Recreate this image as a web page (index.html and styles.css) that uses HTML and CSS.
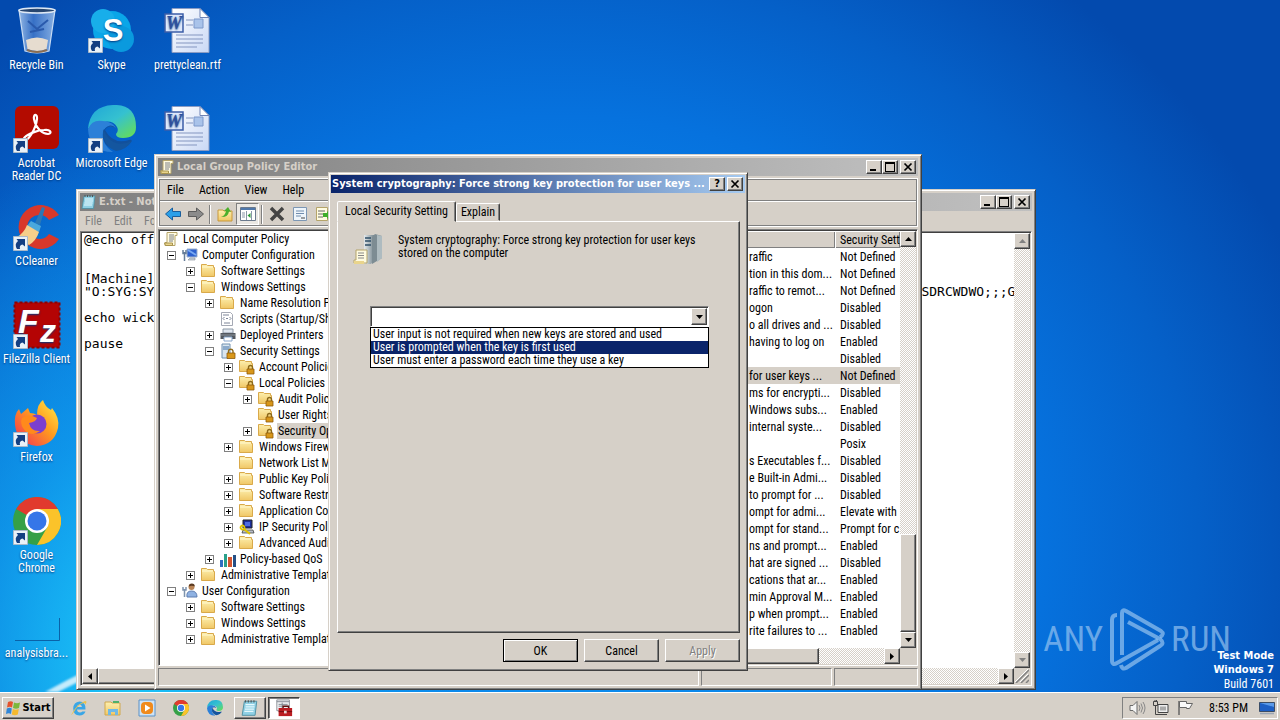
FILE: index.html
```html
<!DOCTYPE html>
<html lang="en">
<head>
<meta charset="utf-8">
<title>Desktop</title>
<link rel="stylesheet" href="styles.css">
</head>
<body>
<svg class="sprites" aria-hidden="true">
  <defs>
    <linearGradient id="gFolder" x1="0" y1="0" x2="0" y2="1"><stop offset="0" stop-color="#fdf0b0"/><stop offset="1" stop-color="#f0c765"/></linearGradient>
    <linearGradient id="gEdge" x1="0" y1="0" x2="1" y2="1"><stop offset="0" stop-color="#1fa5d8"/><stop offset=".5" stop-color="#35c1d0"/><stop offset="1" stop-color="#6be04a"/></linearGradient>
    <linearGradient id="gFox" x1="1" y1="0" x2="0" y2="1"><stop offset="0" stop-color="#fff04a"/><stop offset=".45" stop-color="#ff9a1f"/><stop offset="1" stop-color="#f0285a"/></linearGradient>
    <linearGradient id="gPage" x1="0" y1="0" x2="1" y2="1"><stop offset="0" stop-color="#fff"/><stop offset="1" stop-color="#c9d8f5"/></linearGradient>
    <linearGradient id="gServer" x1="0" y1="0" x2="1" y2="0"><stop offset="0" stop-color="#e4e9ec"/><stop offset="1" stop-color="#6f8088"/></linearGradient>
    <linearGradient id="gBin" x1="0" y1="0" x2="1" y2="0"><stop offset="0" stop-color="#b7d3f2" stop-opacity=".8"/><stop offset=".4" stop-color="#4d80cf" stop-opacity=".7"/><stop offset="1" stop-color="#a8c8ef" stop-opacity=".8"/></linearGradient>
  </defs>
  <symbol id="folder" viewBox="0 0 16 16"><path d="M.5 1.500h5l1 1h6v2h1v9H.5z" fill="url(#gFolder)" stroke="#d9a94a"/><path d="M1 4h11" stroke="#fff8d0"/></symbol>
  <symbol id="lockfolder" viewBox="0 0 16 16"><path d="M.5 1.5h5l1 1h6v2h1v8H.5z" fill="url(#gFolder)" stroke="#d9a94a"/><path d="M9.500 10V8.500a2 2 0 0 1 4 0V10" fill="none" stroke="#8c6a1c" stroke-width="1.400"/><path d="M8 10h7v5H8z" fill="#d8971a" stroke="#8f5c0a" stroke-width=".8"/></symbol>
  <symbol id="scroll" viewBox="0 0 16 16"><path d="M4 1.500h10v3h-2v10H2v-3h2z" fill="#fffbe0" stroke="#b5a46a"/><path d="M1.500 12h8v2.500h-7z" fill="#e9d48c" stroke="#a8934e"/><path d="M6 4h5M6 6h5M6 8h5M6 10h4" stroke="#7d8087"/></symbol>
  <symbol id="computer" viewBox="0 0 16 16"><path d="M5 2h10v8H5z" fill="#2d61cf" stroke="#9fb2cc"/><path d="M6 3l8 5" stroke="#79a9f2" stroke-width="2"/><path d="M8 11h5v2h-7z" fill="#cbd3db" stroke="#818b97" stroke-width=".6"/><path d="M2.500 5v9M1 3v3.500h3V3" fill="none" stroke="#667d98" stroke-width="1.500"/></symbol>
  <symbol id="user" viewBox="0 0 16 16"><circle cx="9.500" cy="4" r="3" fill="#b98455"/><path d="M6.800 3.500q0-3 3-3t3 3q-3-1.500-6 0" fill="#5b3a20"/><path d="M5 14q-1-6 4.500-6t5.500 6z" fill="#8fb2e2" stroke="#5d7db0"/><path d="M2.500 6v8M1 4v3h3V4" fill="none" stroke="#7e93ad" stroke-width="1.500"/></symbol>
  <symbol id="script" viewBox="0 0 16 16"><path d="M1.500 1.500h9l2 2v11h-11z" fill="#fff" stroke="#a5a9b4"/><path d="M4.500 6L3 7.500 4.500 9M9.500 6L11 7.500 9.500 9M6 7.500h2M4 12h6M3 4h6" fill="none" stroke="#7c8497"/></symbol>
  <symbol id="printer" viewBox="0 0 16 16"><path d="M3 2h10v4H3z" fill="#dfe6ef" stroke="#8c98a6"/><path d="M.5 6h15v6H.5z" fill="#53585f"/><path d="M1 8h14" stroke="#8d959f"/><path d="M4 10h8v4H4z" fill="#fff" stroke="#87a6cc"/></symbol>
  <symbol id="secure" viewBox="0 0 16 16"><path d="M2 1h8v14H2z" fill="#d9e5ef" stroke="#7191b0"/><path d="M3 4h6M3 6h6" stroke="#3e70a8"/><path d="M8.500 10V8a2.300 2.300 0 0 1 4.500 0v2" fill="none" stroke="#8c6a1c" stroke-width="1.400"/><path d="M7 10h8v5.500H7z" fill="#d8971a" stroke="#8f5c0a" stroke-width=".8"/></symbol>
  <symbol id="ipsec" viewBox="0 0 16 16"><path d="M4 1h9v8H4z" fill="#1d2f9c" stroke="#222"/><path d="M6 3h5v4H6z" fill="#4d6ce0"/><path d="M4 11h10l1 3H3z" fill="#b9bdc6" stroke="#333" stroke-width=".7"/><circle cx="3.500" cy="8.500" r="2" fill="none" stroke="#e0c400" stroke-width="1.800"/><path d="M5 10l6 5" stroke="#e0c400" stroke-width="2"/></symbol>
  <symbol id="qos" viewBox="0 0 16 16"><path d="M0 9h3v7H0z" fill="#2f6fc2"/><path d="M4 3h3v13H4z" fill="#2aa08a"/><path d="M8 6h4v10H8z" fill="#d3552f"/><path d="M13 4h3v12h-3z" fill="#234f86"/></symbol>
  <symbol id="notepad" viewBox="0 0 16 16"><path d="M3 2h11l-1.500 12.500H1z" fill="#8fd0e4" stroke="#4b8da0" stroke-width=".8"/><path d="M4 5h8M4 7h8M3.500 9h8M3 11h8" stroke="#e6f8fc"/><path d="M4 1v2M6.500 1v2M9 1v2M11.500 1v2" stroke="#555"/></symbol>
  <symbol id="toolbox" viewBox="0 0 20 20"><path d="M2 1h14v12H2z" fill="#eef0f2" stroke="#8a8f96"/><path d="M2 3h14M4 6h10M4 8h10M8 4v8" stroke="#7f868e"/><path d="M9 10V8h6v2" fill="none" stroke="#5c1212" stroke-width="1.500"/><path d="M4 10h15v9H4z" fill="#bb1d22"/><path d="M4 14h15" stroke="#6f0c10"/><path d="M10 13h3v3h-3z" fill="#e5d5d5"/></symbol>
  <symbol id="chrome" viewBox="0 0 48 48"><circle cx="24" cy="24" r="24" fill="#35a047"/><path d="M24 24L3.200 12A24 24 0 0 1 44.800 12z" fill="#e13a2e"/><path d="M24 12H44.800A24 24 0 0 1 24 48L34.400 30z" fill="#fbc32a"/><circle cx="24" cy="24" r="12" fill="#fff"/><circle cx="24" cy="24" r="9.500" fill="#3576e8"/></symbol>
  <symbol id="edge" viewBox="0 0 48 48"><path d="M0 24Q2 1 25 0t23 22q0 11-13 11-7 0-7-4 3-3 1-7-4-7-14-5Q3 18 0 24" fill="url(#gEdge)"/><path d="M0 24Q4 14 15 16q10 1 13 7-10-5-13 4-2 12 10 20Q1 47 0 24" fill="#2c80d8"/><path d="M16 25q-4 18 14 19 8 0 13-7 2-3-2-2-16 5-24-10 3-6 11-2-6-6-12 2" fill="#12509c"/><path d="M15 24q-1 17 13 22 10-1 16-10-20 9-29-12" fill="#14569f"/></symbol>
  <symbol id="word" viewBox="0 0 48 48"><path d="M8 1.500h28l9 9v35H8z" fill="url(#gPage)" stroke="#8a9cc4"/><path d="M36 1.500v9h9z" fill="#fff" stroke="#6f83b4"/><path d="M22 13h7M22 18h7M12 28h27M12 32h27M12 36h27M12 40h21" stroke="#8496c0" stroke-width="1.200"/><path d="M30 12h9v9h-9z" fill="#a9c3ea" stroke="#7d98ca"/><path d="M1 7h18v18H1z" fill="#dfe9fb" stroke="#3c5ea8" stroke-width="1.500"/><text x="10" y="22" text-anchor="middle" class="wordmark">W</text></symbol>
  <symbol id="short" viewBox="0 0 15 15"><path d="M.5.5h14v14H.5z" fill="#e9f1f8" stroke="#a9b9c9"/><path d="M4 13q-3-5 1-8L3.500 3H12v7.500l-2.500-2Q6 9 7 13z" fill="#143f82"/></symbol>
  <symbol id="up" viewBox="0 0 7 4"><path d="M0 4h7L3.500 0z"/></symbol>
  <symbol id="down" viewBox="0 0 7 4"><path d="M0 0h7L3.500 4z"/></symbol>
  <symbol id="left" viewBox="0 0 4 7"><path d="M4 0v7L0 3.500z"/></symbol>
  <symbol id="right" viewBox="0 0 4 7"><path d="M0 0v7l4-3.500z"/></symbol>
  <symbol id="min" viewBox="0 0 10 10"><path d="M1 7h6v2H1z"/></symbol>
  <symbol id="max" viewBox="0 0 10 10"><path d="M0 0h10v10H0zM1 2v7h8V2z" fill-rule="evenodd"/></symbol>
  <symbol id="close" viewBox="0 0 10 10"><path d="M1.500 1.500l7 7M8.500 1.500l-7 7" stroke="#000" stroke-width="1.700"/></symbol>
</svg>

<main class="desktop">
  <svg class="ray" viewBox="0 0 120 50"><path d="M15 50Q60 25 120 0Q70 30 28 50z" fill="#fff" opacity=".75"/></svg>
  <div class="icons">
    <div class="icon-col">
      <div class="dicon"><svg class="art" viewBox="0 0 48 48"><path d="M6 3h36l-6 41q-12 4-24 0z" fill="url(#gBin)" stroke="#c8dcf4" stroke-width="1.200"/><ellipse cx="24" cy="3.500" rx="18" ry="2.500" fill="#27466f" stroke="#dfe9f4" stroke-width="1.500"/><path d="M13 33q11-5 22 0l-1.500 9q-9 4-19 0z" fill="#e6dccf"/><path d="M15 14l9 8 11-9M17 25l14-3" stroke="#2a5aac" stroke-width="2" fill="none"/><path d="M14 43q10 4 20 0" stroke="#8a6d52" stroke-width="2" fill="none"/></svg><span>Recycle Bin</span></div>
      <div class="dicon"><svg class="art" viewBox="0 0 48 48"><rect x="2" y="1" width="44" height="43" rx="6" fill="#b30b00"/><path d="M11 35c3 3 12-11 13-21 .5-6-4-5-3 0 2 10 9 15 14 15 5-1 2-5-4-4-6 0-16 4-19 7-1 1-2 2-1 3z" fill="none" stroke="#fff" stroke-width="2.200"/><use href="#short" x="0" y="33" width="15" height="15"/></svg><span>Acrobat<br>Reader DC</span></div>
      <div class="dicon"><svg class="art" viewBox="0 0 48 48"><path d="M46 12A22 22 0 1 0 46 36L36 31A12 12 0 1 1 36 17z" fill="#d8382b"/><path d="M29 4l3 1-5 17-5-2z" fill="#2c78b5"/><path d="M18 18l10 5-2 6-12-6z" fill="#4aa8dc"/><path d="M14 22l12 7q-3 9-10 13L4 34q7-4 10-12" fill="#f6cf8a"/><use href="#short" x="0" y="33" width="15" height="15"/></svg><span>CCleaner</span></div>
      <div class="dicon"><svg class="art" viewBox="0 0 48 48"><rect x="1.500" y="1.500" width="45" height="45" fill="#b40404" stroke="#8f0000" stroke-width="2" stroke-dasharray="3 2"/><text x="5" y="32" class="fz">F</text><text x="27" y="41" class="fz fz-small">z</text><use href="#short" x="0" y="33" width="15" height="15"/></svg><span>FileZilla Client</span></div>
      <div class="dicon"><svg class="art" viewBox="0 0 48 48"><path d="M2 26Q1 15 6 10l2 5 7-6 2 5q4 0 7 2 0-11 6-15 2 7 8 10l1-2q8 10 6 20-4 17-21 18Q4 45 2 26" fill="url(#gFox)"/><circle cx="24" cy="25" r="9.500" fill="#7b3fd0"/><path d="M9 19q7-5 15 0-1 4-8 5 2 9 11 8-10 7-17-3-3-5-1-10" fill="#ff8a1c"/><use href="#short" x="0" y="33" width="15" height="15"/></svg><span>Firefox</span></div>
      <div class="dicon"><svg class="art" viewBox="0 0 48 48"><use href="#chrome" width="48" height="48"/><use href="#short" x="0" y="33" width="15" height="15"/></svg><span>Google<br>Chrome</span></div>
      <div class="dicon"><svg class="art" viewBox="0 0 48 48"><path d="M2 45.500h44.500V23" fill="none" stroke="#0a62a8"/></svg><span>analysisbra...</span></div>
    </div>
    <div class="icon-col">
      <div class="dicon"><svg class="art" viewBox="0 0 48 48"><circle cx="24" cy="23" r="19" fill="#0aa6e8"/><circle cx="15" cy="14" r="12" fill="#18aeea"/><circle cx="33" cy="32" r="13" fill="#0a9ade"/><text x="25" y="34" text-anchor="middle" class="skype">S</text><use href="#short" x="0" y="31" width="15" height="15"/></svg><span>Skype</span></div>
      <div class="dicon"><svg class="art" viewBox="0 0 48 48"><use href="#edge" width="48" height="48"/><use href="#short" x="0" y="33" width="15" height="15"/></svg><span>Microsoft Edge</span></div>
    </div>
    <div class="icon-col">
      <div class="dicon"><svg class="art"><use href="#word"/></svg><span>prettyclean.rtf</span></div>
      <div class="dicon"><svg class="art"><use href="#word"/></svg></div>
    </div>
  </div>

  <div class="watermark">
    <span>ANY</span>
    <svg viewBox="0 0 58 64" width="58" height="64"><g fill="none" stroke="currentColor" stroke-width="4" stroke-linejoin="round"><path d="M9 7q-5 0-5 5v40q0 6 5 3L50 32"/><path d="M14 47V5q0-4 4-2l35 20q4 3-1 6"/><path d="M20 14l32 17q5 4 0 7L18 60q-4 2-5-3"/></g></svg>
    <span>RUN</span>
  </div>
  <div class="testmode"><b>Test Mode</b><b>Windows 7</b><span>Build 7601</span></div>

  <section class="window notepad" aria-label="E.txt - Notepad">
    <header class="title title-off"><svg class="ic"><use href="#notepad"/></svg><h2>E.txt - Notepad</h2>
      <div class="sys"><button aria-label="Minimize"><svg><use href="#min"/></svg></button><button aria-label="Maximize"><svg><use href="#max"/></svg></button><button class="apart" aria-label="Close"><svg><use href="#close"/></svg></button></div></header>
    <nav class="menu menu-off"><button>File</button><button>Edit</button><button>Format</button></nav>
    <div class="editor sunken">
      <textarea aria-label="Text" spellcheck="false" wrap="off" readonly>@echo off


[Machine]
"O:SYG:SYD:(A;;CCDCLCSWRPWPDTLOCRSDRCWDWO;;;SY)(A;;CCDCLCSWRPWPDTLOCRSDRCWDWO;;;BA)  (A;;CCDCLCSWRPWPDTLOCRSDRCWDWO;;;GA)

echo wick

pause</textarea>
      <div class="vbar dim"><button aria-label="Scroll up"><svg class="av"><use href="#up"/></svg></button><button aria-label="Scroll down"><svg class="av"><use href="#down"/></svg></button></div>
      <div class="hbar"><button aria-label="Scroll left"><svg class="ah"><use href="#left"/></svg></button><div class="thumb"></div><div class="track"></div><button aria-label="Scroll right"><svg class="ah"><use href="#right"/></svg></button></div>
      <svg class="grip" viewBox="0 0 15 15"><path d="M2 15L15 2M7 15l8-8M12 15l3-3" stroke="#808080" stroke-width="1.500"/><path d="M1 14L14 1M6 14l8-8" stroke="#fff"/></svg>
    </div>
  </section>

  <section class="window policy" aria-label="Local Group Policy Editor">
    <header class="title title-off"><svg class="ic"><use href="#scroll"/></svg><h2>Local Group Policy Editor</h2>
      <div class="sys"><button aria-label="Minimize"><svg><use href="#min"/></svg></button><button aria-label="Maximize"><svg><use href="#max"/></svg></button><button class="apart" aria-label="Close"><svg><use href="#close"/></svg></button></div></header>
    <div class="bars">
      <nav class="menu"><button>File</button><button>Action</button><button>View</button><button>Help</button></nav>
      <div class="tools">
        <button aria-label="Back"><svg class="ic" viewBox="0 0 16 16"><path d="M.5 8l7-6v3.500h8v5h-8V14z" fill="#2b9fe8" stroke="#1a5e9c"/></svg></button>
        <button aria-label="Forward"><svg class="ic" viewBox="0 0 16 16"><path d="M15.500 8l-7-6v3.500h-8v5h8V14z" fill="#8b8b8b" stroke="#5c5c5c"/></svg></button>
        <i class="sep"></i>
        <button aria-label="Up one level"><svg class="ic" viewBox="0 0 16 16"><path d="M1 4h5l1 1h8v10H1z" fill="url(#gFolder)" stroke="#c9983b"/><path d="M4 11q4-1 5-6L7 5l4-4 3 5-2-.5q-1 6-8 5.500" fill="#4caf2c"/></svg></button>
        <button class="pressed" aria-label="Console tree"><svg class="ic" viewBox="0 0 16 16"><path d="M.5 1.500h15v13H.5z" fill="#fff" stroke="#6b7a8d"/><path d="M1 3h14" stroke="#4f78ab" stroke-width="2"/><path d="M6.500 5v9M11.500 5v9M2 7h3M2 9h3M2 11h3" stroke="#8a97a8"/><path d="M10.500 7v5L7.500 9.500z" fill="#2c9a3a"/></svg></button>
        <i class="sep"></i>
        <button aria-label="Delete"><svg class="ic" viewBox="0 0 16 16"><path d="M2 2l12 12M14 2L2 14" stroke="#444" stroke-width="3.500"/></svg></button>
        <button aria-label="Properties"><svg class="ic" viewBox="0 0 16 16"><path d="M1.500 1.500h13v13h-13z" fill="#eef5fb" stroke="#7d97b4"/><path d="M4 5h8M4 7.500h8M4 10h5" stroke="#6f8cae"/><path d="M9 12h4" stroke="#444"/></svg></button>
        <button aria-label="Export list"><svg class="ic" viewBox="0 0 16 16"><path d="M1.500 1.500h11v13h-11z" fill="#fffbe0" stroke="#b5a46a"/><path d="M3 5h7M3 8h5M3 11h5" stroke="#666"/><path d="M8 7h4V5l4 4-4 4v-2H8z" fill="#3fae2a"/></svg></button>
      </div>
    </div>
    <div class="panes">
      <div class="tree sunken" role="tree">
        <div class="node l0" role="treeitem"><i class="gap"></i><svg class="ic"><use href="#scroll"/></svg><span>Local Computer Policy</span></div>
        <div class="node l1" role="treeitem"><button class="exp" aria-label="Collapse"></button><svg class="ic"><use href="#computer"/></svg><span>Computer Configuration</span></div>
        <div class="node l2" role="treeitem"><button class="exp plus" aria-label="Expand"></button><svg class="ic"><use href="#folder"/></svg><span>Software Settings</span></div>
        <div class="node l2" role="treeitem"><button class="exp" aria-label="Collapse"></button><svg class="ic"><use href="#folder"/></svg><span>Windows Settings</span></div>
        <div class="node l3" role="treeitem"><button class="exp plus" aria-label="Expand"></button><svg class="ic"><use href="#folder"/></svg><span>Name Resolution Policy</span></div>
        <div class="node l3" role="treeitem"><i class="gap"></i><svg class="ic"><use href="#script"/></svg><span>Scripts (Startup/Shutdown)</span></div>
        <div class="node l3" role="treeitem"><button class="exp plus" aria-label="Expand"></button><svg class="ic"><use href="#printer"/></svg><span>Deployed Printers</span></div>
        <div class="node l3" role="treeitem"><button class="exp" aria-label="Collapse"></button><svg class="ic"><use href="#secure"/></svg><span>Security Settings</span></div>
        <div class="node l4" role="treeitem"><button class="exp plus" aria-label="Expand"></button><svg class="ic"><use href="#lockfolder"/></svg><span>Account Policies</span></div>
        <div class="node l4" role="treeitem"><button class="exp" aria-label="Collapse"></button><svg class="ic"><use href="#lockfolder"/></svg><span>Local Policies</span></div>
        <div class="node l5" role="treeitem"><button class="exp plus" aria-label="Expand"></button><svg class="ic"><use href="#lockfolder"/></svg><span>Audit Policy</span></div>
        <div class="node l5" role="treeitem"><i class="gap"></i><svg class="ic"><use href="#lockfolder"/></svg><span>User Rights Assignment</span></div>
        <div class="node l5" role="treeitem" aria-selected="true"><button class="exp plus" aria-label="Expand"></button><svg class="ic"><use href="#lockfolder"/></svg><span class="picked">Security Options</span></div>
        <div class="node l4" role="treeitem"><button class="exp plus" aria-label="Expand"></button><svg class="ic"><use href="#folder"/></svg><span>Windows Firewall</span></div>
        <div class="node l4" role="treeitem"><i class="gap"></i><svg class="ic"><use href="#folder"/></svg><span>Network List Manager</span></div>
        <div class="node l4" role="treeitem"><button class="exp plus" aria-label="Expand"></button><svg class="ic"><use href="#folder"/></svg><span>Public Key Policies</span></div>
        <div class="node l4" role="treeitem"><button class="exp plus" aria-label="Expand"></button><svg class="ic"><use href="#folder"/></svg><span>Software Restriction</span></div>
        <div class="node l4" role="treeitem"><button class="exp plus" aria-label="Expand"></button><svg class="ic"><use href="#folder"/></svg><span>Application Control</span></div>
        <div class="node l4" role="treeitem"><button class="exp plus" aria-label="Expand"></button><svg class="ic"><use href="#ipsec"/></svg><span>IP Security Policies</span></div>
        <div class="node l4" role="treeitem"><button class="exp plus" aria-label="Expand"></button><svg class="ic"><use href="#folder"/></svg><span>Advanced Audit</span></div>
        <div class="node l3" role="treeitem"><button class="exp plus" aria-label="Expand"></button><svg class="ic"><use href="#qos"/></svg><span>Policy-based QoS</span></div>
        <div class="node l2" role="treeitem"><button class="exp plus" aria-label="Expand"></button><svg class="ic"><use href="#folder"/></svg><span>Administrative Templates</span></div>
        <div class="node l1" role="treeitem"><button class="exp" aria-label="Collapse"></button><svg class="ic"><use href="#user"/></svg><span>User Configuration</span></div>
        <div class="node l2" role="treeitem"><button class="exp plus" aria-label="Expand"></button><svg class="ic"><use href="#folder"/></svg><span>Software Settings</span></div>
        <div class="node l2" role="treeitem"><button class="exp plus" aria-label="Expand"></button><svg class="ic"><use href="#folder"/></svg><span>Windows Settings</span></div>
        <div class="node l2" role="treeitem"><button class="exp plus" aria-label="Expand"></button><svg class="ic"><use href="#folder"/></svg><span>Administrative Templates</span></div>
      </div>
      <div class="list sunken">
        <div class="rows">
          <table>
            <thead><tr><th class="c1"></th><th>Security Setting</th></tr></thead>
            <tbody>
              <tr><td>raffic</td><td>Not Defined</td></tr>
              <tr><td>tion in this dom...</td><td>Not Defined</td></tr>
              <tr><td>raffic to remot...</td><td>Not Defined</td></tr>
              <tr><td>ogon</td><td>Disabled</td></tr>
              <tr><td>o all drives and ...</td><td>Disabled</td></tr>
              <tr><td>having to log on</td><td>Enabled</td></tr>
              <tr><td></td><td>Disabled</td></tr>
              <tr class="picked"><td>for user keys ...</td><td>Not Defined</td></tr>
              <tr><td>ms for encrypti...</td><td>Disabled</td></tr>
              <tr><td>Windows subs...</td><td>Enabled</td></tr>
              <tr><td>internal syste...</td><td>Disabled</td></tr>
              <tr><td></td><td>Posix</td></tr>
              <tr><td>s Executables f...</td><td>Disabled</td></tr>
              <tr><td>e Built-in Admi...</td><td>Disabled</td></tr>
              <tr><td>to prompt for ...</td><td>Disabled</td></tr>
              <tr><td>ompt for admi...</td><td>Elevate with</td></tr>
              <tr><td>ompt for stand...</td><td>Prompt for c</td></tr>
              <tr><td>ns and prompt...</td><td>Enabled</td></tr>
              <tr><td>hat are signed ...</td><td>Disabled</td></tr>
              <tr><td>cations that ar...</td><td>Enabled</td></tr>
              <tr><td>min Approval M...</td><td>Enabled</td></tr>
              <tr><td>p when prompt...</td><td>Enabled</td></tr>
              <tr><td>rite failures to ...</td><td>Enabled</td></tr>
            </tbody>
          </table>
        </div>
        <div class="vbar"><button aria-label="Scroll up"><svg class="av"><use href="#up"/></svg></button><div class="thumb"></div><button aria-label="Scroll down"><svg class="av"><use href="#down"/></svg></button></div>
        <div class="hbar"><div class="thumb"></div><div class="track"></div><button aria-label="Scroll right"><svg class="ah"><use href="#right"/></svg></button></div>
      </div>
    </div>
    <footer class="status"><span></span><span></span><span></span></footer>
  </section>

  <section class="window dialog" role="dialog" aria-labelledby="dlg">
    <header class="title"><h2 id="dlg">System cryptography: Force strong key protection for user keys ...</h2>
      <div class="sys"><button aria-label="Help" class="help">?</button><button class="apart" aria-label="Close"><svg><use href="#close"/></svg></button></div></header>
    <div class="dialog-body">
      <div class="tabs" role="tablist"><button role="tab" class="tab current" aria-selected="true">Local Security Setting</button><button role="tab" class="tab">Explain</button></div>
      <div class="page" role="tabpanel">
        <div class="about">
          <svg viewBox="0 0 32 32" width="32" height="32"><path d="M11 2h11v24l-4 5h-7z" fill="url(#gServer)"/><path d="M22 1l7 2v22l-10 6V4z" fill="#7d8c93"/><path d="M24 2l5 1v22l-5 4z" fill="#aebbc0"/><path d="M12 5h6M12 8h6M12 12h6" stroke="#2f4f68" stroke-width="1.500"/><path d="M3 17h11v13H1v-3h2z" fill="#fffbe0" stroke="#b5a46a"/><path d="M1 28h10v3H1z" fill="#e9d48c"/><path d="M5 20h6M5 22.500h6M5 25h6" stroke="#888"/></svg>
          <p>System cryptography: Force strong key protection for user keys<br>stored on the computer</p>
        </div>
        <div class="combo">
          <select aria-label="Setting"><option></option></select>
          <span class="combo-arrow"><svg class="av"><use href="#down"/></svg></span>
          <ul class="options" role="listbox">
            <li role="option">User input is not required when new keys are stored and used</li>
            <li role="option" aria-selected="true" class="chosen">User is prompted when the key is first used</li>
            <li role="option">User must enter a password each time they use a key</li>
          </ul>
        </div>
      </div>
      <div class="actions"><button class="push default">OK</button><button class="push">Cancel</button><button class="push" disabled>Apply</button></div>
    </div>
  </section>
</main>

<footer class="taskbar">
  <button class="task start"><svg viewBox="0 0 16 16" width="16" height="16"><path d="M3 2q3-1.500 5 0L7 7.500q-2-1.500-5 0z" fill="#e5532d"/><path d="M9 2.500q3 1.500 6 0L14 8q-3 1.500-6 0z" fill="#7cb83c"/><path d="M1.800 8.500q3-1.500 5 0L6 14q-2-1.500-5 0z" fill="#2f86d8"/><path d="M7.800 9q3 1.500 6 0l-1 5.500q-3 1.500-6 0z" fill="#f5b92e"/></svg>Start</button>
  <div class="quick">
    <button aria-label="Internet Explorer"><svg viewBox="0 0 18 18"><path d="M15.500 12.500q-1.500 4-6 4-6 0-6.300-7Q3.500 3 9.500 2.500q6.500.3 6 8H7q.3 3 3 3 1.500 0 2.300-1zM7 8h5q-.3-2.500-2.500-2.500T7 8" fill="#3aa6e6"/><path d="M4 13q-4 5-2 1.500Q7 5 15 2q3 0 0 4 1-3-3-1.500Q7 7 4 13" fill="#e9c24c"/></svg></button>
    <button aria-label="Explorer"><svg viewBox="0 0 18 18"><path d="M1 3h6l1 1h8v12H1z" fill="url(#gFolder)" stroke="#d0a84e"/><path d="M4 16v-6h10v6h-3v-3H7v3z" fill="#6fb9e6"/><path d="M9 3h6" stroke="#4fb06a" stroke-width="2"/></svg></button>
    <button aria-label="Media Player"><svg viewBox="0 0 18 18"><path d="M1 1h16v16H1z" fill="#cfe3f5" stroke="#5b92c8"/><rect x="3" y="3" width="12" height="12" rx="4" fill="#f08a1c"/><path d="M7 5.500v7L12.500 9z" fill="#fff"/></svg></button>
    <button aria-label="Chrome"><svg viewBox="0 0 18 18"><use href="#chrome" x="1" y="1" width="16" height="16"/></svg></button>
    <button aria-label="Edge"><svg viewBox="0 0 18 18"><use href="#edge" x="1" y="1" width="16" height="16"/></svg></button>
  </div>
  <button class="task app" aria-label="Notepad"><svg width="20" height="18"><use href="#notepad"/></svg></button>
  <button class="task app active" aria-label="Group Policy"><svg width="20" height="18"><use href="#toolbox"/></svg></button>
  <div class="tray">
    <svg viewBox="0 0 18 18"><path d="M2 6.500h3l4-4v13l-4-4H2z" fill="#f4f4f4" stroke="#6b6b6b"/><path d="M11 6q2 3 0 6M13 4.500q3 4.500 0 9M15 3q4 6 0 12" fill="none" stroke="#888"/></svg>
    <svg viewBox="0 0 18 18"><path d="M6 5.500h10v8H6z" fill="#eee" stroke="#444"/><path d="M8 7.500h6v4H8z" fill="#aaa"/><path d="M8 15.500h7M3.500 7v8.500H8M1.500 2.500h4v4h-4zM3 2.500V1M4.500 2.500V1" fill="none" stroke="#444"/></svg>
    <svg viewBox="0 0 18 18"><path d="M3 2v14" stroke="#666" stroke-width="1.500"/><path d="M3.500 2.500h7v2h6l-3 5h-3v-1h-7z" fill="#fafafa" stroke="#666"/></svg>
    <time>8:53 PM</time>
    <svg viewBox="0 0 18 18"><path d="M1.500 3.500h15v9h-15z" fill="#1d5fc4" stroke="#3b4d66"/><path d="M2 4l14 4V4z" fill="#5b9ae8"/><path d="M2 14.500h14" stroke="#9aa6b4" stroke-width="1.500"/></svg>
  </div>
</footer>
</body>
</html>
```
FILE: styles.css
```css
:root {
  --face: #d6d0c8;
  --dark: #404040;
  --shade: #808080;
  --ui: "Roboto Condensed", "Liberation Sans", sans-serif;
  --bold: "DejaVu Sans Condensed", "DejaVu Sans", sans-serif;
  --mono: "DejaVu Sans Mono", "Liberation Mono", monospace;
}

* { box-sizing: border-box; }

body {
  margin: 0;
  height: 100vh;
  display: flex;
  flex-direction: column;
  overflow: hidden;
  font: 12px/16px var(--ui);
  color: #000;
}

button, select, textarea {
  font: inherit;
  color: inherit;
  margin: 0;
  padding: 0;
  border: 0;
  border-radius: 0;
  background: none;
}

h2, p, ul { margin: 0; padding: 0; }
.sprites { position: absolute; width: 0; height: 0; }
.ic { width: 16px; height: 16px; flex: none; }

/* Desktop */
.desktop {
  flex: 1;
  min-height: 0;
  position: relative;
  overflow: hidden;
  background:
    radial-gradient(ellipse 26% 75% at 10% 96%, rgba(30, 205, 250, .95), rgba(20, 175, 245, .6) 45%, transparent),
    radial-gradient(ellipse 62% 102% at 44% 78%, #1192f0, #0a85ea 35%, #0672de 60%, #0560c8 80%, #034aae);
}
.ray { position: absolute; left: 30px; bottom: 0; width: 120px; height: 50px; filter: blur(1px); }

.icons { display: flex; gap: 1px; position: relative; }
.icon-col { display: flex; flex-direction: column; width: 73px; }
.icon-col:nth-child(2) { width: 75px; }
.icon-col:nth-child(3) { width: 75px; }

.dicon {
  height: 98px;
  padding-top: 7px;
  display: flex;
  flex-direction: column;
  align-items: center;
  gap: 4px;
  color: #fff;
  line-height: 13px;
  text-align: center;
  white-space: nowrap;
  text-shadow: 0 1px 2px #023a80;
}
.art { width: 48px; height: 48px; flex: none; }
.wordmark { font: italic bold 18px "Liberation Serif", serif; fill: #2f4f9c; }
.fz { font: italic bold 34px "Liberation Sans", sans-serif; fill: #fff; }
.fz-small { font-size: 32px; }
.skype { font: bold 31px "Liberation Sans", sans-serif; fill: #fff; }

.watermark {
  position: absolute;
  right: 49px;
  bottom: 20px;
  display: flex;
  align-items: center;
  gap: 5px;
  color: rgba(150, 195, 240, .7);
  font: 400 35px/64px "Roboto Condensed", "Liberation Sans", sans-serif;
}
.testmode {
  position: absolute;
  right: 6px;
  bottom: 0;
  display: flex;
  flex-direction: column;
  align-items: flex-end;
  color: #fff;
  line-height: 15px;
}
.testmode b { font: bold 11px/14px var(--bold); }

/* Windows */
.window {
  position: absolute;
  display: flex;
  flex-direction: column;
  padding: 2px;
  background: var(--face);
  border: 1px solid;
  border-color: var(--face) var(--dark) var(--dark) var(--face);
  box-shadow: inset 1px 1px #fff, inset -1px -1px var(--shade);
}
.notepad { left: 76px; top: 189px; width: 960px; height: 501px; padding: 3px; }
.policy { left: 154px; top: 154px; width: 768px; height: 536px; padding: 3px; }
.dialog { left: 328px; top: 172px; width: 420px; height: 499px; }

.title {
  display: flex;
  align-items: center;
  gap: 2px;
  height: 18px;
  padding: 0 2px 0 1px;
  flex: none;
  color: #fff;
  background: linear-gradient(90deg, #0a246a, #a6caf0);
}
.title h2 { flex: 1; min-width: 0; font: bold 11px/18px var(--bold); white-space: nowrap; overflow: hidden; }
.title-off { color: var(--face); background: linear-gradient(90deg, #808080, #c0c0c0); }

.sys { display: flex; }
.sys button {
  width: 16px;
  height: 14px;
  display: grid;
  place-items: center;
}
.sys svg { width: 10px; height: 10px; }
.sys .apart { margin-left: 2px; }
.help { font: bold 11px/12px var(--bold); color: #000; }

.sys button, .vbar button, .hbar button, .thumb, .push, .task, .combo-arrow {
  background: var(--face);
  border: 1px solid;
  border-color: #fff var(--dark) var(--dark) #fff;
  box-shadow: inset -1px -1px var(--shade);
}
.sunken {
  border: 1px solid;
  border-color: var(--shade) #fff #fff var(--shade);
  box-shadow: inset 1px 1px var(--dark);
  padding: 1px;
}

.menu { display: flex; align-items: center; gap: 15px; padding: 0 8px; height: 22px; flex: none; }
.menu-off { height: 20px; gap: 12px; padding: 0 5px; color: var(--shade); }

/* Scroll bars */
.vbar, .hbar, .track {
  background: repeating-conic-gradient(#fff 0 25%, var(--face) 0 50%) 0 0 / 2px 2px;
}
.vbar { width: 16px; display: flex; flex-direction: column; justify-content: space-between; }
.hbar { height: 16px; display: flex; }
.track { flex: 1; }
.vbar button, .hbar button { width: 16px; height: 16px; flex: none; display: grid; place-items: center; }
.av { width: 7px; height: 4px; }
.ah { width: 4px; height: 7px; }
.dim .av { fill: var(--shade); }

/* Notepad */
.editor {
  flex: 1;
  min-height: 0;
  display: grid;
  grid-template-columns: 1fr 16px;
  grid-template-rows: 1fr 16px;
  background: var(--face);
}
.editor textarea {
  resize: none;
  outline: 0;
  overflow: hidden;
  background: #fff;
  padding: 0 2px;
  font: 13px/13px var(--mono);
  white-space: pre;
}
.editor .thumb { flex: 0 0 85%; }
.grip { width: 15px; height: 15px; }

/* Policy editor */
.bars { border: 1px solid #fff; outline: 1px solid var(--shade); outline-offset: -2px; margin: 2px 0; flex: none; }
.tools {
  display: flex;
  align-items: center;
  height: 25px;
  padding: 0 2px;
  border-top: 1px solid #fff;
  box-shadow: 0 -1px var(--shade);
}
.tools button { width: 23px; height: 22px; display: grid; place-items: center; }
.tools .pressed { background: #ebe8e3; border: 1px solid; border-color: var(--shade) #fff #fff var(--shade); }
.sep { width: 2px; height: 19px; margin: 0 2px; border-left: 1px solid var(--shade); border-right: 1px solid #fff; }

.panes { flex: 1; min-height: 0; display: flex; gap: 4px; }
.tree {
  flex: 1;
  min-width: 0;
  overflow: hidden;
  background: #fff;
  padding: 1px 3px;
}
.node { display: flex; align-items: center; height: 16px; gap: 6px; white-space: nowrap; }
.node .ic { margin-right: -3px; }
.node span { padding: 0 1px; }
.gap { width: 9px; flex: none; }
.l0 { margin-left: -14px; }
.l1 { margin-left: 5px; }
.l2 { margin-left: 24px; }
.l3 { margin-left: 43px; }
.l4 { margin-left: 62px; }
.l5 { margin-left: 81px; }
.exp {
  width: 9px;
  height: 9px;
  flex: none;
  border: 1px solid var(--shade);
  background: linear-gradient(#000, #000) center / 5px 1px no-repeat #fff;
}
.exp.plus {
  background:
    linear-gradient(#000, #000) center / 5px 1px no-repeat,
    linear-gradient(#000, #000) center / 1px 5px no-repeat, #fff;
}
.picked { background: var(--face); }

.list {
  width: 178px;
  flex: none;
  background: var(--face);
  display: grid;
  grid-template-columns: 1fr 16px;
  grid-template-rows: 1fr 16px;
}
.rows { background: #fff; overflow: hidden; }
.rows table { width: 100%; table-layout: fixed; border-collapse: collapse; }
.rows td, .rows th { padding: 0 0 0 5px; height: 17px; white-space: nowrap; overflow: hidden; text-align: left; font-weight: normal; }
.rows td:first-child { padding-left: 7px; }
.rows th {
  background: var(--face);
  box-shadow: inset 1px 1px #fff, inset -1px -1px var(--shade);
}
.rows .c1 { width: 93px; }
.list .vbar .thumb { height: 98px; margin-top: auto; }
.list .hbar .thumb { flex: 0 0 77px; }

.status { display: flex; gap: 2px; height: 20px; padding-top: 2px; flex: none; }
.status span { border: 1px solid; border-color: var(--shade) #fff #fff var(--shade); flex: 0 0 84px; }
.status span:first-child { flex: 1; }
.status span:nth-child(2) { flex-basis: 131px; }

/* Dialog */
.dialog-body { flex: 1; display: flex; flex-direction: column; padding: 8px 5px 6px 6px; }
.tabs { display: flex; align-items: flex-end; height: 20px; }
.tab {
  height: 18px;
  padding: 0 4px;
  border: 1px solid;
  border-color: #fff var(--dark) transparent #fff;
  border-radius: 2px 2px 0 0;
  box-shadow: inset -1px 0 var(--shade);
  line-height: 16px;
}
.tab.current {
  height: 21px;
  padding: 0 7px 2px;
  margin-bottom: -1px;
  background: var(--face);
  z-index: 1;
}
.page {
  flex: 1;
  padding: 11px 30px 0 16px;
  border: 1px solid;
  border-color: #fff var(--dark) var(--dark) #fff;
  box-shadow: inset -1px -1px var(--shade);
}
.about { display: flex; gap: 12px; margin-left: -1px; }
.about p { line-height: 13px; padding: 1px 0 0 1px; }
.combo { position: relative; margin: 41px 0 0 16px; }
.combo select {
  display: block;
  appearance: none;
  width: 100%;
  height: 21px;
  background: #fff;
  border: 1px solid;
  border-color: var(--shade) #fff #fff var(--shade);
  box-shadow: inset 1px 1px var(--dark);
}
.combo-arrow {
  position: absolute;
  top: 2px;
  right: 2px;
  width: 16px;
  height: 17px;
  display: grid;
  place-items: center;
  pointer-events: none;
}
.options {
  position: absolute;
  top: 100%;
  left: 0;
  right: 0;
  list-style: none;
  background: #fff;
  border: 1px solid #000;
}
.options li { padding: 0 2px; line-height: 13px; white-space: nowrap; }
.chosen { background: #0a246a; color: #fff; }

.actions { display: flex; justify-content: flex-end; gap: 6px; padding-top: 6px; }
.push { width: 75px; height: 23px; }
.push.default { outline: 1px solid #000; outline-offset: -1px; border-color: #000; box-shadow: inset 1px 1px #fff, inset -1px -1px var(--shade); }
.push:disabled { color: var(--shade); text-shadow: 1px 1px #fff; }

/* Taskbar */
.taskbar {
  flex: none;
  display: flex;
  align-items: center;
  gap: 2px;
  height: 28px;
  padding: 3px 2px 1px;
  background: var(--face);
  border-top: 1px solid #fff;
}
.task { height: 22px; display: flex; align-items: center; justify-content: center; gap: 1px; }
.start { width: 52px; font: bold 11px/16px var(--bold); }
.quick { display: flex; gap: 16px; padding: 0 8px 0 14px; }
.quick button, .quick svg { width: 18px; height: 18px; display: block; }
.app { width: 32px; }
.app.active { background: #fff; border-color: var(--dark) #fff #fff var(--dark); box-shadow: inset 1px 1px var(--shade); }
.tray {
  margin-left: auto;
  height: 22px;
  padding: 0 1px 0 5px;
  display: flex;
  align-items: center;
  gap: 6px;
  border: 1px solid;
  border-color: var(--shade) #fff #fff var(--shade);
}
.tray svg { width: 18px; height: 18px; }
.tray time { padding: 0 4px 0 9px; }
```
